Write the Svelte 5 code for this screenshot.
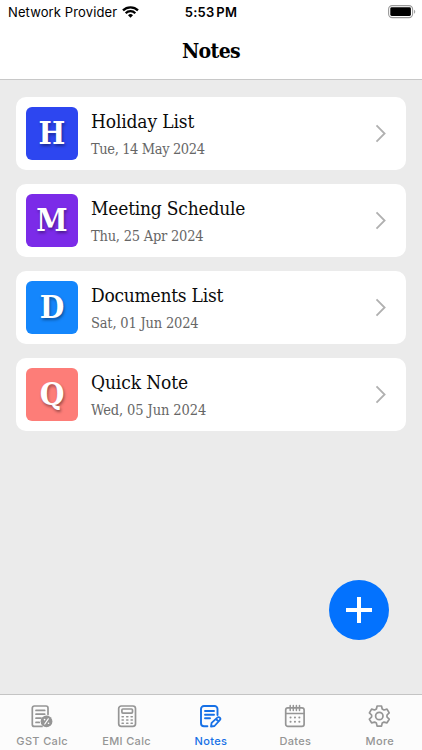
<script lang="ts">
  interface Note {
    title: string;
    date: string;
    color: string;
    titleSpacing: number;
    dateSpacing: number;
  }

  const notes: Note[] = [
    { title: "Holiday List", date: "Tue, 14 May 2024", color: "#2d46f0", titleSpacing: -0.14, dateSpacing: -0.38 },
    { title: "Meeting Schedule", date: "Thu, 25 Apr 2024", color: "#7b2be8", titleSpacing: -0.2, dateSpacing: -0.22 },
    { title: "Documents List", date: "Sat, 01 Jun 2024", color: "#1486fc", titleSpacing: -0.24, dateSpacing: -0.18 },
    { title: "Quick Note", date: "Wed, 05 Jun 2024", color: "#fd7d78", titleSpacing: -0.1, dateSpacing: -0.1 },
  ];

  const tabs = [
    { id: "gst", label: "GST Calc" },
    { id: "emi", label: "EMI Calc" },
    { id: "notes", label: "Notes" },
    { id: "dates", label: "Dates" },
    { id: "more", label: "More" },
  ];

  let active = $state("notes");
</script>

<div class="screen">
  <header>
    <div class="status">
      <span class="carrier">
        <span class="provider">Network Provider</span>
        <svg width="17" height="12" viewBox="0 0 17 12" fill="none" stroke="#000" stroke-width="2.3">
          <path d="M1 4.4a10.7 10.7 0 0 1 15 0" />
          <path d="M3.7 7.2a6.8 6.8 0 0 1 9.6 0" />
          <path d="M8.5 11.8 6 9.3a3.6 3.6 0 0 1 5 0z" fill="#000" stroke="none" />
        </svg>
      </span>
      <span class="time">5:53 PM</span>
      <svg class="battery" width="28" height="14" viewBox="0 0 28 14">
        <rect x="0.6" y="0.6" width="24" height="12" rx="3.6" fill="none" stroke="#9a9a9a" stroke-width="1.1" />
        <rect x="2.3" y="2.3" width="20.6" height="8.6" rx="1.4" />
        <path d="M26 4.7v4a2.2 2.2 0 0 0 0-4z" fill="#a4a4a4" />
      </svg>
    </div>
    <h1>Notes</h1>
  </header>

  <main>
    {#each notes as note (note.title)}
      <button class="card">
        <span class="tile" style:background={note.color}>{note.title[0]}</span>
        <span class="text">
          <span class="title" style:letter-spacing="{note.titleSpacing}px">{note.title}</span>
          <span class="date" style:letter-spacing="{note.dateSpacing}px">{note.date}</span>
        </span>
        <svg width="12" height="20" viewBox="0 0 12 20" fill="none" stroke="#b0b0b0" stroke-width="1.8">
          <path d="M1.5 2.3 9.6 10.5l-8.1 8.2" />
        </svg>
      </button>
    {/each}

    <button class="add" aria-label="Add note">
      <svg width="28" height="28" viewBox="0 0 28 28" stroke="#fff" stroke-width="4">
        <path d="M14 1v26M1 14h26" />
      </svg>
    </button>
  </main>

  <nav>
    {#each tabs as tab (tab.id)}
      <button class="tab" class:active={active === tab.id} onclick={() => (active = tab.id)}>
        <svg width="24" height="24" viewBox="0 0 24 24" fill="none" stroke="currentColor" stroke-width="1.7" stroke-linecap="round" stroke-linejoin="round">
          {#if tab.id === "gst"}
            <path d="M18 10.5V4a2 2 0 0 0-2-2H4.3a2 2 0 0 0-2 2v16.4a2 2 0 0 0 2 2H12" />
            <path d="M6 6.4h8.7M6 10.2h8.7M6 14.2h5M6 18.4h3.2" />
            <circle cx="16.5" cy="17.4" r="5.9" fill="currentColor" stroke="none" />
            <path d="m14.8 20 3.5-5.2" stroke="#fff" stroke-width="1.2" />
            <path d="M14.5 15.6h.1M18.5 19.2h.1" stroke="#fff" stroke-width="1.6" />
          {:else if tab.id === "emi"}
            <rect x="3.7" y="2" width="16.8" height="20.4" rx="2.6" />
            <rect x="6.9" y="5" width="10.6" height="4.1" rx="1" />
            <path d="M7.1 12.8h1.2M11.7 12.8h1.2M16.1 12.8h1.2M7.1 16h1.2M11.7 16h1.2M16.1 16h1.2M7.1 19.2h1.2M11.7 19.2h1.2M16.1 19.2h1.2" stroke-width="1.6" />
          {:else if tab.id === "notes"}
            <path d="M18.5 11V5a3 3 0 0 0-3-3H5a3 3 0 0 0-3 3v14.2a3 3 0 0 0 3 3h3.4" stroke-width="1.9" />
            <path d="M6 7h9M6 10.7h9M6 14.3h5" stroke-width="1.9" />
            <path d="m12 22.5.6-3.7 5.7-5.2a1.7 1.7 0 0 1 2.5 2.5L15.5 22zM17 15l2.5 2.5" stroke-width="1.8" />
          {:else if tab.id === "dates"}
            <rect x="2.7" y="3.8" width="18.4" height="18.6" rx="2.2" />
            <path d="M3 9.4h18M7.2 1.5v5M10.3 1.5v5M13.4 1.5v5M16.5 1.5v5" stroke-width="1.5" />
            <path d="M7.5 13.5h.1M11.9 13.5h.1M16.3 13.5h.1M7.5 17.8h.1M11.9 17.8h.1M16.3 17.8h.1" stroke-width="2" />
          {:else}
            <path d="M9.1 2h4.4l.7 3 1.8 1 3-.9 2.2 3.8-2.2 2.1v2l2.2 2.2-2.2 3.7-3-.8-1.8 1-.7 3H9.1l-.7-3-1.8-1-3 .8-2.2-3.7L3.6 13v-2L1.4 8.9l2.2-3.8 3 .9 1.8-1z" />
            <circle cx="11.3" cy="12" r="3.7" />
          {/if}
        </svg>
        <span>{tab.label}</span>
      </button>
    {/each}
  </nav>
</div>

<style>
  :global(body) {
    overflow: hidden;
  }

  .screen {
    --serif: "DejaVu Serif Condensed", "DejaVu Serif", serif;
    display: flex;
    flex-direction: column;
    position: relative;
    height: 750px;
    background: #ebebeb;
    font-family: Inter, sans-serif;
  }

  button {
    border: 0;
    padding: 0;
    font: inherit;
    text-align: left;
    cursor: pointer;
  }

  header {
    box-sizing: border-box;
    height: 80px;
    background: #fff;
    border-bottom: 1px solid #c8c8c8;
  }

  .status {
    display: grid;
    grid-template-columns: 1fr auto 1fr;
    align-items: center;
    height: 24px;
    padding: 0 6px 0 8px;
    font-size: 13px;
    line-height: 24px;
  }

  .carrier {
    display: flex;
    align-items: center;
    gap: 5px;
  }

  .provider {
    letter-spacing: 0.12px;
    white-space: nowrap;
  }

  .time {
    padding-right: 2px;
    font-weight: 600;
    letter-spacing: 0.2px;
    word-spacing: -1.5px;
  }

  .battery {
    justify-self: end;
  }

  h1 {
    margin: 0;
    padding-top: 10px;
    font: bold 21px/34px var(--serif);
    letter-spacing: -0.6px;
    text-align: center;
  }

  main {
    display: flex;
    flex-direction: column;
    flex: 1;
    gap: 13.5px;
    padding: 16.6px 16px 0;
  }

  .card {
    display: flex;
    align-items: center;
    box-sizing: border-box;
    height: 73.5px;
    padding: 0 19px 0 10px;
    background: #fff;
    border-radius: 10px;
  }

  .tile {
    display: flex;
    justify-content: center;
    width: 52px;
    height: 53.5px;
    border-radius: 6px;
    color: #fff;
    font: bold 31.5px/52px var(--serif);
    text-shadow: 1px 2px 3px rgb(0 0 0 / 40%);
  }

  .text {
    display: flex;
    flex-direction: column;
    flex: 1;
    gap: 2px;
    padding: 2px 0 0 13px;
    font-family: var(--serif);
    white-space: nowrap;
  }

  .title {
    color: #0c0c0c;
    font-size: 19px;
    line-height: 28px;
  }

  .date {
    color: #666;
    font-size: 14.5px;
    line-height: 24px;
  }

  .add {
    display: flex;
    align-items: center;
    justify-content: center;
    position: absolute;
    right: 33px;
    bottom: 110px;
    width: 60px;
    height: 60px;
    background: #0372fe;
    border-radius: 50%;
  }

  nav {
    display: grid;
    grid-template-columns: repeat(5, 1fr);
    box-sizing: border-box;
    height: 56px;
    background: #fcfcfc;
    border-top: 1px solid #c4c4c4;
  }

  .tab {
    display: flex;
    flex-direction: column;
    align-items: center;
    gap: 5px;
    padding-top: 9px;
    background: none;
    color: #959595;
    font-size: 11px;
    font-weight: 450;
    line-height: 16px;
    letter-spacing: 0.35px;
  }

  .tab.active {
    color: #1670e6;
  }
</style>
